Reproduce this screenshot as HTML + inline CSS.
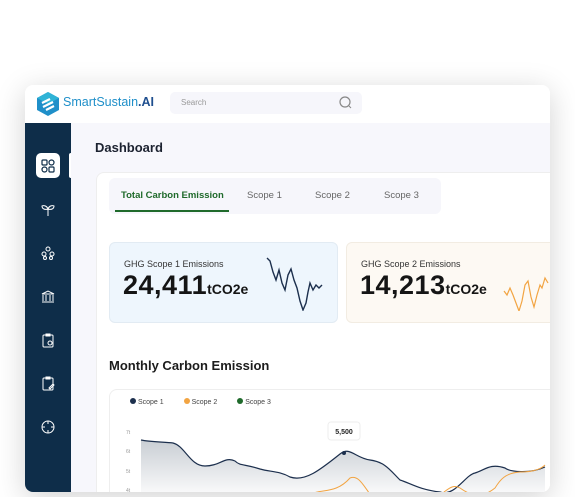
<!DOCTYPE html>
<html><head><style>
*{margin:0;padding:0;box-sizing:border-box}
body{width:575px;height:497px;background:#fff;font-family:"Liberation Sans",sans-serif;position:relative;overflow:hidden}
.win{position:absolute;left:25px;top:85px;width:525px;height:407px;background:#fff;border-radius:8px;box-shadow:0 6px 30px rgba(0,0,0,.18);overflow:hidden}
.side{position:absolute;left:0;top:38px;width:46px;height:369px;background:#0e2d49}
.main{position:absolute;left:46px;top:38px;right:0;bottom:0;background:#f7f7fc}
.ic{position:absolute;left:11px;width:24px;height:24px}
</style></head><body>
<div class="win">
 <svg style="position:absolute;left:10px;top:6px" width="26" height="26" viewBox="0 0 26 26"><polygon points="13,1 24,7 24,19 13,25 2,19 2,7" fill="#1f8fc9"/><polygon points="13,1 24,7 13,13 2,7" fill="#2fb3d6"/><path d="M7 12 L15 8 M8 16 L18 11 M11 19 L19 15" stroke="#fff" stroke-width="2.2"/></svg>
 <div style="position:absolute;left:38px;top:10px;font-size:12.5px;color:#1f8fc9">SmartSustain<b style="color:#1f4f8f">.AI</b></div>
 <div style="position:absolute;left:145px;top:7px;width:192px;height:22px;background:#f6f6fb;border-radius:5px"><span style="position:absolute;left:11px;top:6px;font-size:8px;color:#999">Search</span><svg style="position:absolute;right:9px;top:4px" width="14" height="14"><circle cx="6" cy="6" r="5" stroke="#888" fill="none" stroke-width="1.2"/><path d="M10 10l2 2" stroke="#888"/></svg></div>
 <div class="side">
  <div style="position:absolute;left:11px;top:30px;width:24px;height:25px;background:#fff;border-radius:5px"></div>
  <div style="position:absolute;left:44px;top:30px;width:4px;height:25px;background:#fff;border-radius:2px"></div>
  <svg class="ic" style="top:31px" viewBox="0 0 24 24" fill="none" stroke="#0e2d49" stroke-width="1.2"><rect x="6" y="6" width="5" height="5" rx="1"/><rect x="13" y="6" width="5" height="5" rx="2.5"/><rect x="6" y="13" width="5" height="5" rx="2.5"/><rect x="13" y="13" width="5" height="5" rx="1"/></svg>
  <svg class="ic" style="top:75px" viewBox="0 0 24 24" fill="none" stroke="#fff" stroke-width="1"><path d="M12 18v-7M12 11c-1-3-4-4-6-3 0 3 3 4 6 3zM12 11c1-3 4-4 6-3 0 3-3 4-6 3z"/></svg>
  <svg class="ic" style="top:118px" viewBox="0 0 24 24" fill="none" stroke="#fff" stroke-width="1"><circle cx="12" cy="8" r="2"/><circle cx="8" cy="13" r="2"/><circle cx="16" cy="13" r="2"/><circle cx="9" cy="17" r="1.5"/><circle cx="15" cy="17" r="1.5"/></svg>
  <svg class="ic" style="top:161px" viewBox="0 0 24 24" fill="none" stroke="#fff" stroke-width="1"><path d="M6 10l6-3 6 3zM7 11v6M10 11v6M14 11v6M17 11v6M6 18h12"/></svg>
  <svg class="ic" style="top:205px" viewBox="0 0 24 24" fill="none" stroke="#fff" stroke-width="1"><rect x="7" y="7" width="10" height="12" rx="1"/><path d="M10 6h4v2h-4z"/><circle cx="14" cy="15" r="2"/></svg>
  <svg class="ic" style="top:248px" viewBox="0 0 24 24" fill="none" stroke="#fff" stroke-width="1"><rect x="7" y="7" width="10" height="12" rx="1"/><path d="M10 6h4v2h-4zM13 17l4-4 1 1-4 4z"/></svg>
  <svg class="ic" style="top:292px" viewBox="0 0 24 24" fill="none" stroke="#fff" stroke-width="1"><circle cx="12" cy="12" r="6"/><path d="M12 6v3M12 15v3M6 12h3M15 12h3"/></svg>
 </div>
 <div class="main">
  <div style="position:absolute;left:24px;top:17px;font-size:13px;font-weight:bold;color:#1c2230">Dashboard</div>
  <div style="position:absolute;left:25px;top:49px;width:470px;height:330px;background:#fff;border-radius:8px;border:1px solid #eee">
   <div style="position:absolute;left:12px;top:5px;width:332px;height:36px;background:#f6f6fb;border-radius:6px;font-size:9.5px;color:#666">
    <span style="position:absolute;left:12px;top:12px;color:#1f6a2b;font-weight:bold">Total Carbon Emission</span>
    <div style="position:absolute;left:6px;top:32px;width:114px;height:2px;background:#1f6a2b"></div>
    <span style="position:absolute;left:138px;top:12px">Scope 1</span>
    <span style="position:absolute;left:206px;top:12px">Scope 2</span>
    <span style="position:absolute;left:275px;top:12px">Scope 3</span>
   </div>
   <div style="position:absolute;left:12px;top:69px;width:229px;height:81px;background:#eef6fd;border:1px solid #e2ebf3;border-radius:6px">
    <div style="position:absolute;left:14px;top:16px;font-size:9px;color:#333">GHG Scope 1 Emissions</div>
    <div style="position:absolute;left:13px;top:27px;font-size:27px;font-weight:bold;color:#151515;letter-spacing:.5px">24,411<span style="font-size:14px;letter-spacing:0">tCO2e</span></div>
    <svg style="position:absolute;left:155px;top:12px" width="60" height="56"><path d="M2 3 5 6 8 17 11 25 14 15 17 28 20 35 23 20 26 14 29 25 32 33 35 46 38 55 41 48 43 37 45 28 48 35 51 30 54 33 57 30" stroke="#1c2f4d" fill="none" stroke-width="1.4"/></svg>
   </div>
   <div style="position:absolute;left:249px;top:69px;width:229px;height:81px;background:#fdf9f3;border:1px solid #f2ece2;border-radius:6px">
    <div style="position:absolute;left:14px;top:16px;font-size:9px;color:#333">GHG Scope 2 Emissions</div>
    <div style="position:absolute;left:13px;top:27px;font-size:27px;font-weight:bold;color:#151515;letter-spacing:.5px">14,213<span style="font-size:14px;letter-spacing:0">tCO2e</span></div>
    <svg style="position:absolute;left:155px;top:12px" width="60" height="56"><path d="M2 36 5 40 8 33 11 40 14 48 17 56 20 46 23 30 26 26 29 42 32 52 35 40 38 30 40 33 43 23 46 28" stroke="#f2a442" fill="none" stroke-width="1.2"/></svg>
   </div>
   <div style="position:absolute;left:12px;top:185px;font-size:13px;font-weight:bold;color:#1c1c1c">Monthly Carbon Emission</div>
   <div style="position:absolute;left:12px;top:216px;width:470px;height:120px;background:#fff;border:1px solid #eee;border-radius:8px">
    <div style="position:absolute;left:20px;top:8px;font-size:7px;color:#444;display:flex;gap:20px">
     <span><b style="display:inline-block;width:6px;height:6px;border-radius:3px;background:#1c2f4d"></b> Scope 1</span>
     <span><b style="display:inline-block;width:6px;height:6px;border-radius:3px;background:#f2a442"></b> Scope 2</span>
     <span><b style="display:inline-block;width:6px;height:6px;border-radius:3px;background:#1f6a2b"></b> Scope 3</span>
    </div>
    <svg style="position:absolute;left:0;top:0" width="450" height="110">
     <g font-size="5" fill="#999"><text x="16" y="44">7t</text><text x="16" y="63">6t</text><text x="16" y="83">5t</text><text x="16" y="102">4t</text></g>
     <defs><linearGradient id="g" x1="0" y1="0" x2="0" y2="1"><stop offset="0" stop-color="#c9ced4"/><stop offset="1" stop-color="#fff"/></linearGradient></defs>
     <path d="M31 50 C40 52,55 52,63 53 C75 56,80 76,95 76 C110 76,115 66,125 71 C130 76,135 74,150 79 C160 82,170 81,180 87 C195 92,210 80,230 64 C240 56,245 68,260 70 C275 72,280 80,290 90 C300 93,310 100,330 102 C345 107,355 85,365 83 C375 80,380 73,395 78 C400 82,420 84,435 77 L435 110 L31 110Z" fill="url(#g)"/>
     <path d="M31 50 C40 52,55 52,63 53 C75 56,80 76,95 76 C110 76,115 66,125 71 C130 76,135 74,150 79 C160 82,170 81,180 87 C195 92,210 80,230 64 C240 56,245 68,260 70 C275 72,280 80,290 90 C300 93,310 100,330 102 C345 107,355 85,365 83 C375 80,380 73,395 78 C400 82,420 84,435 77" stroke="#1c2f4d" fill="none" stroke-width="1.2"/>
     <path d="M200 105 C210 98,225 105,240 88 C250 84,255 100,265 110 M320 110 C335 105,340 92,350 98 C360 105,370 110,385 98 C390 90,395 83,410 82 C420 82,430 80,435 75" stroke="#f2a442" fill="none" stroke-width="1"/>
     <circle cx="234" cy="63" r="2" fill="#1c2f4d"/>
     <rect x="218" y="32" width="32" height="18" rx="3" fill="#fff" stroke="#eee"/>
     <text x="234" y="44" font-size="7" text-anchor="middle" fill="#222" font-weight="bold">5,500</text>
    </svg>
   </div>
  </div>
 </div>
</div>
</body></html>
